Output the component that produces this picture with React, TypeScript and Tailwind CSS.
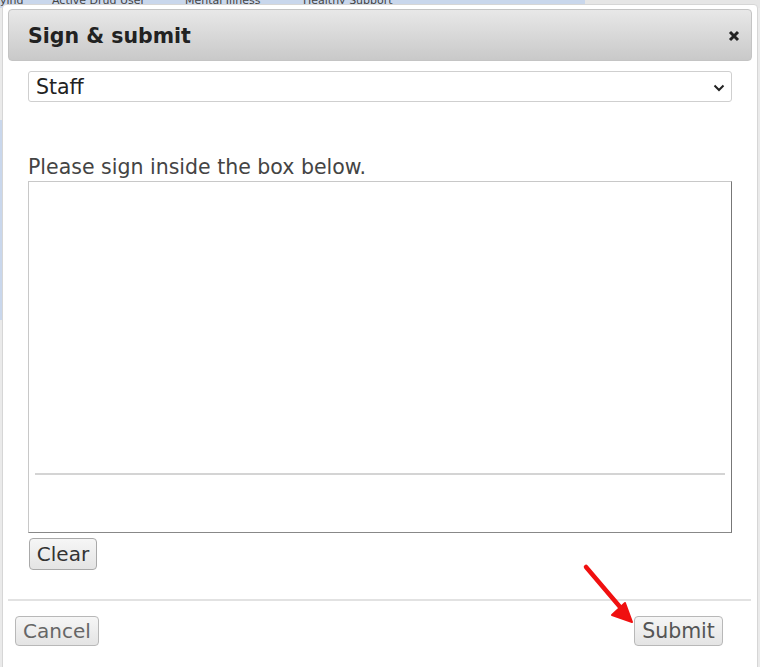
import React from "react";

const font = { fontFamily: '"DejaVu Sans", Verdana, sans-serif' };

export default function App() {
  return (
    <div className="relative w-[760px] h-[667px] overflow-hidden bg-[#eaeaea]" style={font}>
      {/* background page strip */}
      <div className="flex h-[8px]">
        <div className="relative w-[585px] bg-[#c9d7ec] overflow-hidden whitespace-nowrap text-[11px] leading-[8px] text-[#444]">
          <div className="flex -mt-[3px]">
            <span className="w-[52px]">ying</span>
            <span className="w-[133px]">Active Drug User</span>
            <span className="w-[118px]">Mental Illness</span>
            <span>Healthy Support</span>
          </div>
        </div>
        <div className="flex-1 bg-[#e6e6e6]" />
      </div>
      <div className="absolute left-0 top-[120px] w-[2px] h-[200px] bg-[#c9d7ec]" />

      {/* dialog */}
      <div className="absolute left-[2px] top-[4px] w-[756px] h-[700px] bg-white border border-[#d6d6d6] rounded-t-[4px] pt-[4px] pl-[5px]">
        <div className="w-[744px] h-[52px] rounded-[4px] border border-[#c4c4c4] bg-gradient-to-b from-[#e8e8e8] to-[#c9c9c9] flex items-center justify-between pl-[19px] pr-[11px]">
          <span className="text-[20.5px] font-bold text-[#222] leading-none pt-[3px]">Sign &amp; submit</span>
          <svg width="12" height="12" viewBox="0 0 12 12" className="mt-[2px]">
            <path d="M2 2 L10 10 M10 2 L2 10" stroke="#222" strokeWidth="3" strokeLinecap="butt" />
          </svg>
        </div>

        <div className="pl-[20px] pt-[10px]">
          <div className="relative w-[704px] h-[31px] border border-[#cfcfcf] rounded-[3px] bg-white flex items-center pl-[7px]">
            <span className="text-[20.5px] text-[#222] leading-none pt-[1px]">Staff</span>
            <svg width="12" height="8" viewBox="0 0 12 8" className="absolute right-[6px] top-[12px]">
              <path d="M1.5 1.5 L6 6 L10.5 1.5" stroke="#222" strokeWidth="2" fill="none" />
            </svg>
          </div>

          <div className="mt-[52px] text-[20.5px] leading-[26px] text-[#444]">Please sign inside the box below.</div>

          <div className="mt-[1px] w-[704px] h-[352px] border border-t-[#c8c8c8] border-l-[#c8c8c8] border-r-[#777] border-b-[#888] flex flex-col justify-end pb-[57px] px-[6px]">
            <div className="h-[2px] bg-[#d4d4d4]" />
          </div>

          <button className="mt-[5px] ml-[1px] w-[68px] h-[32px] rounded-[4px] border border-[#a9a9a9] bg-gradient-to-b from-[#f6f6f6] to-[#e4e4e4] text-[20px] text-[#333] leading-none">
            Clear
          </button>
        </div>

        <div className="mt-[29px] w-[743px] h-[2px] bg-[#e2e2e2]" />

        <div className="flex justify-between items-center mt-[15px] pl-[7px] w-[715px]">
          <button className="w-[84px] h-[30px] rounded-[4px] border border-[#b8b8b8] bg-gradient-to-b from-[#f6f6f6] to-[#e4e4e4] text-[20px] text-[#666] leading-none">
            Cancel
          </button>
          <button className="w-[89px] h-[30px] rounded-[4px] border border-[#b8b8b8] bg-gradient-to-b from-[#f6f6f6] to-[#e4e4e4] text-[20.5px] text-[#555] leading-none">
            Submit
          </button>
        </div>
      </div>

      {/* red annotation arrow */}
      <svg className="absolute left-[580px] top-[560px]" width="70" height="70" viewBox="0 0 70 70">
        <path d="M6 7 L46 54" stroke="#f01010" strokeWidth="4.5" strokeLinecap="round" />
        <path d="M52 62 L32 55 L45 43 Z" fill="#f01010" stroke="#f01010" strokeWidth="2" strokeLinejoin="round" />
      </svg>
    </div>
  );
}
